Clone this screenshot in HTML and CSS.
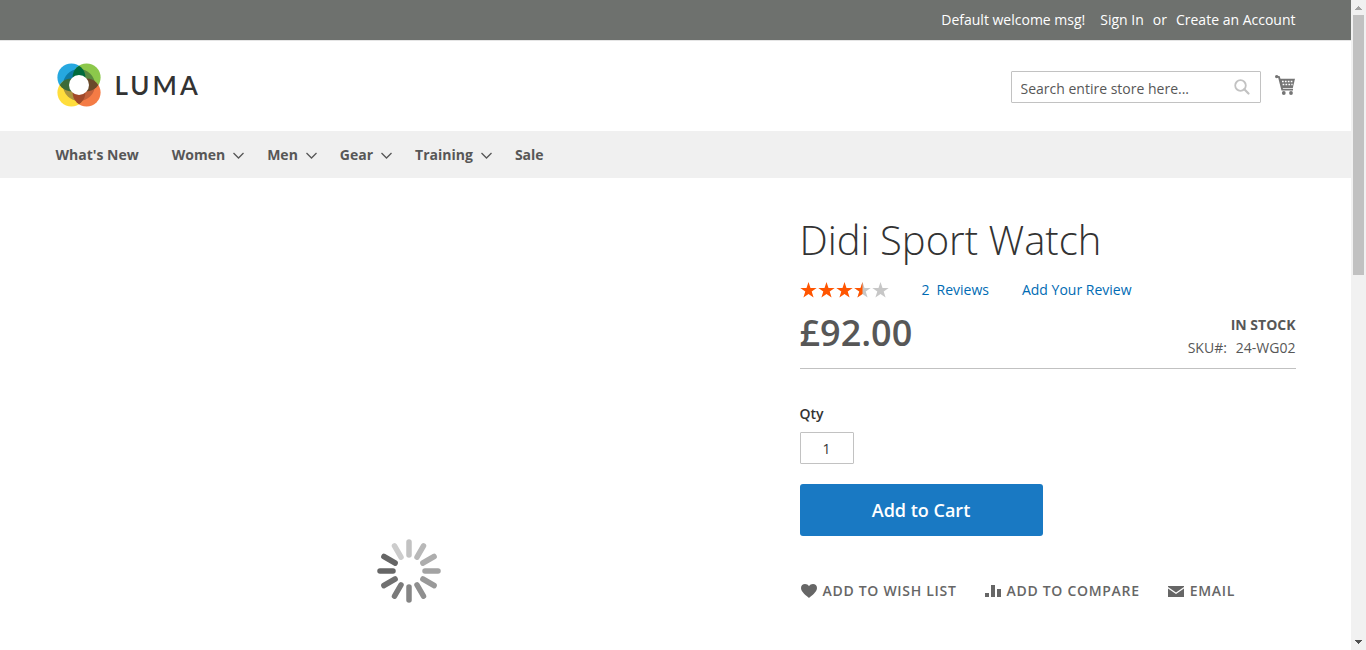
FILE: index.html
```html
<!DOCTYPE html>
<html lang="en">
<head>
<meta charset="utf-8">
<meta name="viewport" content="width=device-width, initial-scale=1">
<title>Didi Sport Watch</title>
<link rel="stylesheet" href="styles.css">
</head>
<body>
<div class="viewport">
  <div class="page">
    <header>
      <div class="panel">
        <div class="container panel-links">
          <span class="welcome">Default welcome msg!</span>
          <a href="#">Sign In</a>
          <span>or</span>
          <a href="#">Create an Account</a>
        </div>
      </div>
      <div class="container masthead">
        <a class="logo" href="#" aria-label="Luma">
          <svg class="logo-mark" viewBox="-22 -22 44 44" aria-hidden="true">
            <defs>
              <clipPath id="tl"><circle cx="-7.600" cy="-7.600" r="14"/></clipPath>
              <clipPath id="br"><circle cx="7.600" cy="7.600" r="14"/></clipPath>
              <clipPath id="ring"><circle r="16"/></clipPath>
            </defs>
            <circle cx="-7.600" cy="-7.600" r="14" fill="#26a8e0"/>
            <circle cx="7.600" cy="-7.600" r="14" fill="#8cc84b"/>
            <circle cx="7.600" cy="7.600" r="14" fill="#f47b45"/>
            <circle cx="-7.600" cy="7.600" r="14" fill="#ffdd3c"/>
            <g clip-path="url(#ring)">
              <path d="M-22-22H0V0H-22z" fill="#0e7ba6"/>
              <path d="M0-22H22V0H0z" fill="#59883f"/>
              <path d="M0 0H22V22H0z" fill="#c2603a"/>
              <path d="M-22 0H0V22H-22z" fill="#ab953f"/>
            </g>
            <g clip-path="url(#tl)">
              <circle cx="7.600" cy="-7.600" r="14" fill="#006b3c"/>
              <circle cx="-7.600" cy="7.600" r="14" fill="#3b6b38"/>
            </g>
            <g clip-path="url(#br)">
              <circle cx="7.600" cy="-7.600" r="14" fill="#69492a"/>
              <circle cx="-7.600" cy="7.600" r="14" fill="#a1492a"/>
            </g>
            <circle r="10" fill="#fff"/>
          </svg>
          <span class="logo-text">LUMA</span>
        </a>
        <div class="tools">
          <form class="search" role="search">
            <input type="text" aria-label="Search" placeholder="Search entire store here...">
            <button type="button" aria-label="Search">
              <svg viewBox="0 0 16 16" aria-hidden="true"><circle cx="6.5" cy="6.5" r="5.3" fill="none" stroke="#c2c2c2" stroke-width="1.8"/><path d="M10.3 10.3l4.2 4.2" stroke="#c2c2c2" stroke-width="2.2" stroke-linecap="round"/></svg>
            </button>
          </form>
          <a class="cart" href="#" aria-label="My Cart">
            <svg viewBox="0 0 20 20" aria-hidden="true">
              <circle cx="1.6" cy="1.6" r="1.6" fill="#757575"/>
              <path d="M1.500 1.300L4 2l3.200 12.600H18" fill="none" stroke="#757575" stroke-width="1.900"/>
              <path d="M4.500 3.800H20L17.800 13H6.800z" fill="#757575"/>
              <path d="M7 6.500h11M7.600 9.500h10" stroke="#fff" stroke-width="1.500" stroke-dasharray="1.700 1.200"/>
              <circle cx="8.800" cy="18" r="1.900" fill="#757575"/><circle cx="16" cy="18" r="1.900" fill="#757575"/>
            </svg>
          </a>
        </div>
      </div>
    </header>
    <nav class="nav" aria-label="Main">
      <div class="container nav-list">
        <a class="wide" href="#">What's New</a>
        <a href="#">Women <svg class="chevron" viewBox="0 0 12 7"><path d="M1 1l5 5 5-5"/></svg></a>
        <a href="#">Men <svg class="chevron" viewBox="0 0 12 7"><path d="M1 1l5 5 5-5"/></svg></a>
        <a href="#">Gear <svg class="chevron" viewBox="0 0 12 7"><path d="M1 1l5 5 5-5"/></svg></a>
        <a href="#">Training <svg class="chevron" viewBox="0 0 12 7"><path d="M1 1l5 5 5-5"/></svg></a>
        <a href="#">Sale</a>
      </div>
    </nav>
    <main class="container product">
      <div class="media">
        <svg class="loader" viewBox="-32 -32 64 64" role="img" aria-label="Loading" stroke-width="5.5" stroke-linecap="round">
          <path d="M0-16V-29" stroke="#c2c2c2"/>
          <path d="M0-16V-29" stroke="#b8b8b8" transform="rotate(30)"/>
          <path d="M0-16V-29" stroke="#adadad" transform="rotate(60)"/>
          <path d="M0-16V-29" stroke="#a3a3a3" transform="rotate(90)"/>
          <path d="M0-16V-29" stroke="#999" transform="rotate(120)"/>
          <path d="M0-16V-29" stroke="#8f8f8f" transform="rotate(150)"/>
          <path d="M0-16V-29" stroke="#858585" transform="rotate(180)"/>
          <path d="M0-16V-29" stroke="#7a7a7a" transform="rotate(210)"/>
          <path d="M0-16V-29" stroke="#707070" transform="rotate(240)"/>
          <path d="M0-16V-29" stroke="#666" transform="rotate(270)"/>
          <path d="M0-16V-29" stroke="#666" transform="rotate(300)"/>
          <path d="M0-16V-29" stroke="#ccc" transform="rotate(330)"/>
        </svg>
      </div>
      <section class="info">
        <h1>Didi Sport Watch</h1>
        <div class="reviews">
          <svg class="stars" viewBox="0 0 88 16" role="img" aria-label="Rating: 70%">
            <defs>
              <path id="star" d="M8 0l2 5.900h6.200l-5 3.700 1.900 6L8 12l-5.100 3.600 1.900-6-5-3.700H6z"/>
              <clipPath id="rated"><path d="M-1 0h63v16H-1z"/></clipPath>
            </defs>
            <g fill="#c7c7c7"><use href="#star" x="54"/><use href="#star" x="72"/></g>
            <g fill="#ff5501" clip-path="url(#rated)"><use href="#star"/><use href="#star" x="18"/><use href="#star" x="36"/><use href="#star" x="54"/></g>
          </svg>
          <a class="count" href="#"><span>2</span><span>Reviews</span></a>
          <a href="#">Add Your Review</a>
        </div>
        <div class="summary">
          <div class="price">£92.00</div>
          <div class="stock">
            <strong>In stock</strong>
            <div class="sku"><span>SKU#:</span><span>24-WG02</span></div>
          </div>
        </div>
        <form class="buy">
          <label for="qty">Qty</label>
          <input id="qty" type="text" value="1">
          <button type="button">Add to Cart</button>
        </form>
        <div class="social">
          <a href="#"><svg viewBox="0 0 16 16" aria-hidden="true"><path d="M8 15C5.500 12.800 0 9 0 5c0-2.500 1.800-4 4-4 1.700 0 3.200.8 4 2.200C8.800 1.800 10.300 1 12 1c2.200 0 4 1.500 4 4 0 4-5.500 7.800-8 10z"/></svg>Add to Wish List</a>
          <a href="#"><svg viewBox="0 0 16 16" aria-hidden="true"><path d="M0 10h4v4H0zM6 2h4v12H6zM12 6h4v8h-4z"/></svg>Add to Compare</a>
          <a href="#"><svg viewBox="0 0 16 16" aria-hidden="true"><path d="M0 3h16v1L8 9.500 0 4z"/><path d="M0 5.500l8 5.500 8-5.500V14H0z"/></svg>Email</a>
        </div>
      </section>
    </main>
  </div>
  <div class="scrollbar" aria-hidden="true">
    <svg viewBox="0 0 15 15"><path d="M4 10h7v-1h-1v-1H9V7H8V6H7v1H6v1H5v1H4z" fill="#a3a3a3"/></svg>
    <div class="track"><div class="thumb"></div></div>
    <svg viewBox="0 0 15 15"><path d="M4 5h7v1h-1v1H9v1H8v1H7V8H6V7H5V6H4z" fill="#505050"/></svg>
  </div>
</div>
</body>
</html>
```
FILE: styles.css
```css
*, *::before, *::after { box-sizing: border-box; }
body {
  margin: 0;
  background: #fff;
  color: #575757;
  font: 14px/20px "Open Sans", "Noto Sans", sans-serif;
}
a { color: #006bb4; text-decoration: none; }
svg { display: block; flex: none; }
input, button { font: inherit; }

.viewport { display: grid; grid-template-columns: minmax(0, 1fr) 15px; height: 100vh; overflow: hidden; }
.page { min-width: 0; }
.container { width: 100%; max-width: 1280px; margin: 0 auto; padding: 0 20px; }

.panel { background: #6e716e; color: #fff; border-bottom: 1px solid #e5e5e5; }
.panel a { color: #fff; }
.panel-links { display: flex; justify-content: flex-end; gap: 9px; padding-top: 10px; padding-bottom: 10px; }
.welcome { margin-right: 6px; }

.masthead { display: flex; justify-content: space-between; align-items: center; padding-top: 22px; padding-bottom: 24px; }
.logo { display: flex; align-items: center; gap: 14px; padding-left: 1px; color: #333; }
.logo-mark { width: 44px; height: 44px; }
.logo-text { font: 600 26px/30px Lato, sans-serif; letter-spacing: 3px; }
.tools { display: flex; align-items: center; gap: 14px; padding-right: 1px; }
.search { display: flex; align-items: center; width: 250px; height: 32px; margin-top: 4px; border: 1px solid #c2c2c2; border-radius: 1px; }
.search input { flex: 1; min-width: 0; height: 30px; padding: 2px 0 0 9px; border: 0; outline: 0; background: none; }
.search input::placeholder { color: #575757; opacity: 1; }
.search button { padding: 0 10px; border: 0; background: none; }
.search svg { width: 16px; height: 16px; }
.cart svg { width: 20px; height: 20px; }

.nav { background: #f0f0f0; }
.nav-list { display: flex; gap: 22px; padding-top: 14px; padding-bottom: 13px; font-weight: 700; }
.nav a { display: flex; align-items: center; gap: 7px; color: #575757; }
.nav .wide { margin-right: 11px; }
.chevron { width: 13px; height: 7px; margin-top: 1px; fill: none; stroke: #575757; stroke-width: 1.3; }

.product { display: grid; grid-template-columns: 57% 40%; justify-content: space-between; }
.media { display: flex; justify-content: center; padding-top: 361px; }
.loader { width: 64px; height: 64px; }
.info { padding-top: 40px; }
h1 { margin: 0; color: #333; font-size: 40px; line-height: 44px; font-weight: 300; }
.reviews { display: flex; align-items: center; gap: 33px; margin-top: 18px; }
.stars { width: 89px; height: 16px; overflow: visible; }
.count { display: flex; gap: 7px; }
.summary { display: flex; justify-content: space-between; align-items: flex-start; padding-bottom: 10px; border-bottom: 1px solid #c1c1c1; }
.price { margin-top: 15px; font-size: 36px; line-height: 36px; font-weight: 600; }
.stock { margin-top: 15px; text-align: right; }
.stock strong { display: block; text-transform: uppercase; }
.sku { display: flex; gap: 9px; margin-top: 3px; }
.buy { display: flex; flex-direction: column; align-items: flex-start; padding-top: 35px; }
.buy label { color: #333; font-weight: 600; }
.buy input { width: 54px; height: 32px; margin-top: 8px; padding: 0; border: 1px solid #c2c2c2; border-radius: 1px; background: #fff; color: #333; text-align: center; }
.buy button { width: 49%; height: 52px; margin-top: 20px; border: 0; border-radius: 3px; background: #1979c3; color: #fff; font-size: 18px; font-weight: 600; }
.social { display: flex; gap: 28px; margin-top: 45px; padding-left: 1px; font-weight: 600; letter-spacing: 0.05em; text-transform: uppercase; white-space: nowrap; }
.social a { display: flex; align-items: center; gap: 6px; color: #666; }
.social svg { width: 16px; height: 16px; fill: #666; }

.scrollbar { display: flex; flex-direction: column; background: #f1f1f1; }
.scrollbar svg { width: 15px; height: 15px; }
.track { flex: 1; padding: 0 2px; }
.thumb { height: 42%; background: #c1c1c1; }
```
